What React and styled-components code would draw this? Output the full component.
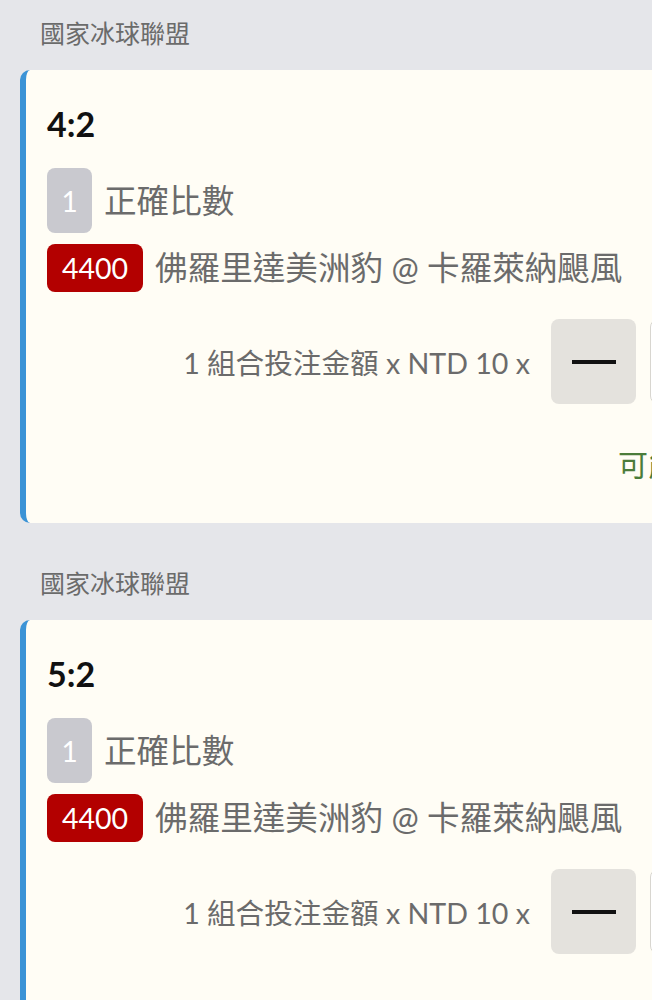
import React from "react";
import styled, { createGlobalStyle } from "styled-components";

const GlobalStyle = createGlobalStyle`
  html, body {
    margin: 0;
    padding: 0;
    background: #e5e6ea;
  }
  body {
    font-family: Lato, "Noto Sans CJK TC", sans-serif;
    overflow: hidden;
  }
`;

const bets = [
  {
    league: "國家冰球聯盟",
    score: "4:2",
    count: 1,
    market: "正確比數",
    odds: "4400",
    match: "佛羅里達美洲豹 @ 卡羅萊納颶風",
    stake: 10,
  },
  {
    league: "國家冰球聯盟",
    score: "5:2",
    count: 1,
    market: "正確比數",
    odds: "4400",
    match: "佛羅里達美洲豹 @ 卡羅萊納颶風",
    stake: 10,
  },
];

const BetCard = ({ league, score, count, market, odds, match, stake }) => {
  return (
    <Section>
      <LeagueTitle>{league}</LeagueTitle>
      <Card>
        <Score>{score}</Score>
        <InfoRow>
          <CountBadge>{count}</CountBadge>
          <InfoText>{market}</InfoText>
        </InfoRow>
        <InfoRow spaced>
          <OddsBadge>{odds}</OddsBadge>
          <InfoText>{match}</InfoText>
        </InfoRow>
        <StakeRow>
          <StakeText>1 組合投注金額 x NTD {stake} x</StakeText>
          <StepButton aria-label="minus">
            <MinusBar />
          </StepButton>
          <StakeInput value="1" readOnly />
          <StepButton aria-label="plus">+</StepButton>
        </StakeRow>
        <WinRow>可能獲勝 NTD 440</WinRow>
      </Card>
    </Section>
  );
};

const App = () => {
  return (
    <>
      <GlobalStyle />
      <Page>
        {bets.map((bet, index) => (
          <BetCard key={"bet" + index} {...bet} />
        ))}
      </Page>
    </>
  );
};

const Page = styled.div`
  width: 652px;
  overflow: hidden;
`;

const Section = styled.div`
  padding: 18px 0 27px 20px;
`;

const LeagueTitle = styled.div`
  padding-left: 20px;
  font-size: 25px;
  line-height: 30px;
  color: #6b6b6b;
`;

const Card = styled.div`
  margin-top: 22px;
  width: 870px;
  box-sizing: border-box;
  background: #fffdf5;
  border-left: 6px solid #3b93d6;
  border-radius: 10px;
  padding: 33px 21px 39px 21px;
  display: flex;
  flex-direction: column;
`;

const Score = styled.div`
  font-size: 34px;
  line-height: 41px;
  font-weight: 700;
  color: #111;
  margin-bottom: 24px;
`;

const InfoRow = styled.div`
  display: flex;
  align-items: center;
  gap: 12px;
  margin-top: ${(props) => (props.spaced ? "11px" : "0")};
`;

const CountBadge = styled.div`
  width: 45px;
  height: 65px;
  border-radius: 8px;
  background: #c9c9cf;
  color: #fff;
  font-size: 28px;
  display: flex;
  align-items: center;
  justify-content: center;
`;

const OddsBadge = styled.div`
  height: 48px;
  width: 96px;
  border-radius: 8px;
  background: #b30000;
  color: #fff;
  font-size: 28.5px;
  display: flex;
  align-items: center;
  justify-content: center;
`;

const InfoText = styled.div`
  font-size: 32.6px;
  line-height: 40px;
  color: #6b6b6b;
  white-space: nowrap;
`;

const StakeRow = styled.div`
  margin-top: 27px;
  display: flex;
  align-items: center;
  justify-content: flex-end;
  gap: 14px;
`;

const StakeText = styled.div`
  font-size: 28.6px;
  color: #6b6b6b;
  margin-right: 7px;
  white-space: nowrap;
`;

const StepButton = styled.button`
  width: 85px;
  height: 85px;
  border: none;
  border-radius: 8px;
  background: #e4e2dd;
  display: flex;
  align-items: center;
  justify-content: center;
  font-size: 44px;
  color: #111;
  padding: 0;
`;

const MinusBar = styled.span`
  display: block;
  width: 44px;
  height: 4px;
  background: #111;
`;

const StakeInput = styled.input`
  width: 120px;
  height: 85px;
  box-sizing: border-box;
  border: 1px solid #d8d6d0;
  border-radius: 8px;
  background: #fff;
  text-align: center;
  font-size: 28px;
  font-family: Lato, sans-serif;
`;

const WinRow = styled.div`
  margin-top: 40px;
  text-align: right;
  font-size: 30px;
  line-height: 40px;
  color: #4b7c3a;
  white-space: nowrap;
`;

export default App;
